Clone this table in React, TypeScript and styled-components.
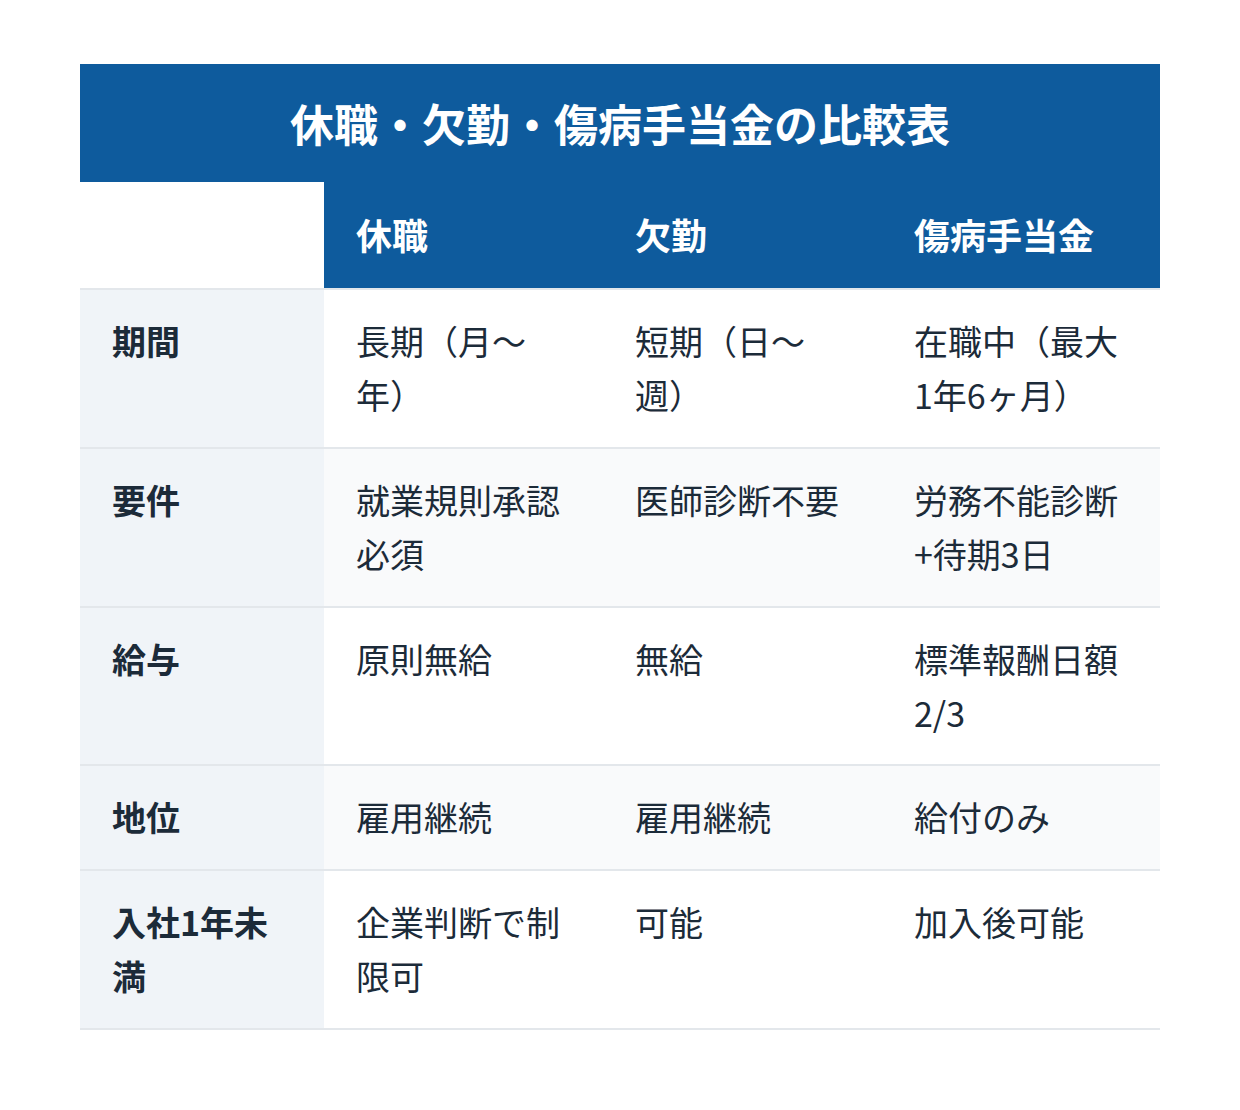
import styled, { createGlobalStyle } from "styled-components";

const GlobalStyle = createGlobalStyle`
  body {
    margin: 0;
    background: #ffffff;
    font-family: "Noto Sans CJK JP", "Noto Sans", sans-serif;
    color: #1c2b39;
  }
`;

const Page = styled.div`
  padding: 64px 80px;
`;

const TableBox = styled.div`
  width: 1080px;
`;

const Title = styled.div`
  background: #0e5b9d;
  color: #ffffff;
  font-size: 44px;
  font-weight: 700;
  line-height: 1.6;
  padding: 24px 32px;
  text-align: center;
`;

const Table = styled.table`
  width: 100%;
  border-collapse: collapse;
  table-layout: fixed;
`;

const HeadCell = styled.th<{ $blank?: boolean }>`
  background: ${({ $blank }) => ($blank ? "#ffffff" : "#0e5b9d")};
  color: #ffffff;
  font-size: 36px;
  font-weight: 700;
  line-height: 1.6;
  padding: 24px 32px;
  text-align: left;
`;

const Row = styled.tr<{ $shade: boolean }>`
  border-top: 2px solid #e3e7eb;
  border-bottom: 2px solid #e3e7eb;
  background: ${({ $shade }) => ($shade ? "#f9fafb" : "#ffffff")};
`;

const RowHead = styled.th`
  background: #f0f4f8;
  font-size: 34px;
  font-weight: 700;
  line-height: 1.6;
  padding: 24px 32px;
  text-align: left;
  vertical-align: top;
`;

const Cell = styled.td`
  font-size: 34px;
  font-weight: 400;
  line-height: 1.6;
  padding: 24px 32px;
  vertical-align: top;
`;

const columns = ["休職", "欠勤", "傷病手当金"];

const rows = [
  { label: "期間", values: ["長期（月〜年）", "短期（日〜週）", "在職中（最大1年6ヶ月）"] },
  { label: "要件", values: ["就業規則承認必須", "医師診断不要", "労務不能診断+待期3日"] },
  { label: "給与", values: ["原則無給", "無給", "標準報酬日額2/3"] },
  { label: "地位", values: ["雇用継続", "雇用継続", "給付のみ"] },
  { label: "入社1年未満", values: ["企業判断で制限可", "可能", "加入後可能"] },
];

const App = () => {
  return (
    <Page>
      <GlobalStyle />
      <TableBox>
        <Title>休職・欠勤・傷病手当金の比較表</Title>
        <Table>
          <colgroup>
            <col style={{ width: 244 }} />
            <col style={{ width: 279 }} />
            <col style={{ width: 279 }} />
            <col style={{ width: 278 }} />
          </colgroup>
          <thead>
            <tr>
              <HeadCell $blank />
              {columns.map((c) => (
                <HeadCell key={c}>{c}</HeadCell>
              ))}
            </tr>
          </thead>
          <tbody>
            {rows.map((row, i) => (
              <Row key={row.label} $shade={i % 2 === 1}>
                <RowHead>{row.label}</RowHead>
                {row.values.map((v, j) => (
                  <Cell key={j}>{v}</Cell>
                ))}
              </Row>
            ))}
          </tbody>
        </Table>
      </TableBox>
    </Page>
  );
};

export default App;
